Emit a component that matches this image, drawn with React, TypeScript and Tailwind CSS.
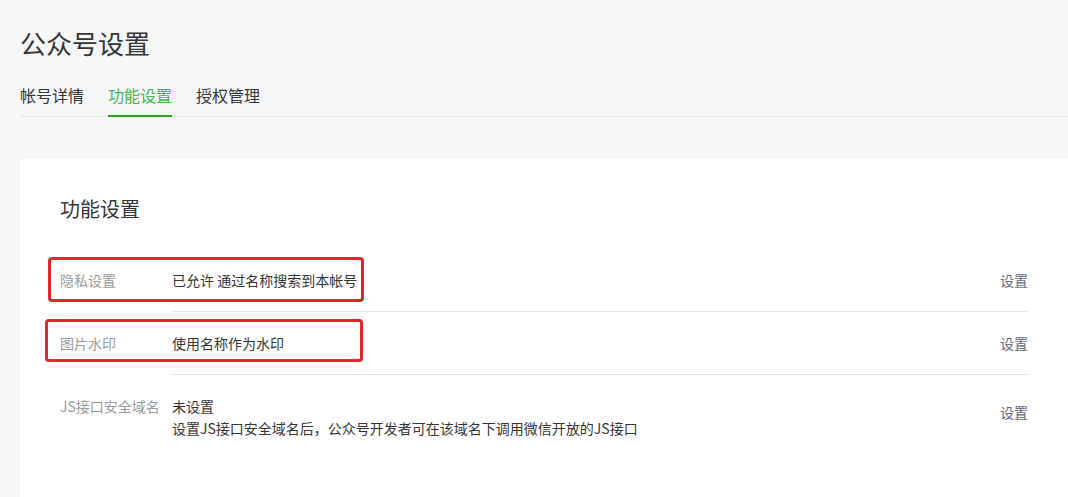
import React from "react"

const font = { fontFamily: '"Microsoft YaHei", "Noto Sans CJK SC", "Noto Sans", sans-serif' }

interface SettingRow {
  label: string
  lines: string[]
}

const rows: SettingRow[] = [
  { label: "隐私设置", lines: ["已允许 通过名称搜索到本帐号"] },
  { label: "图片水印", lines: ["使用名称作为水印"] },
  {
    label: "JS接口安全域名",
    lines: ["未设置", "设置JS接口安全域名后，公众号开发者可在该域名下调用微信开放的JS接口"],
  },
]

const tabs = ["帐号详情", "功能设置", "授权管理"]

function Tabs() {
  return (
    <div className="flex gap-6 border-b border-[#e4e6e8] mt-[14px]">
      {tabs.map((t, i) => (
        <div
          key={t}
          className={
            i === 1
              ? "h-[40px] leading-[37px] text-[16px] text-[#44b549] border-b-2 border-[#2ea121] -mb-px"
              : "h-[40px] leading-[37px] text-[16px] text-[#353535] -mb-px"
          }
        >
          {t}
        </div>
      ))}
    </div>
  )
}

export default function App() {
  return (
    <div className="min-h-screen bg-[#f6f7f8] pl-5 pt-[23px]" style={font}>
      <h1 className="text-[26px] leading-[40px] text-[#353535] font-normal">公众号设置</h1>
      <Tabs />

      <div className="relative mt-[42px] bg-white pl-10 pr-10 pt-[35px] pb-16 min-h-[340px]">
        <h2 className="text-[20px] leading-[30px] text-[#353535] font-normal mb-[25px]">功能设置</h2>

        {rows.map((row, i) => {
          const last = i === rows.length - 1
          return (
            <div key={row.label} className="flex text-[14px] leading-[22px]">
              <div className="w-[112px] py-5 text-[#9a9a9a] shrink-0">{row.label}</div>
              <div
                className={
                  last
                    ? "flex-1 flex justify-between py-5"
                    : "flex-1 flex justify-between py-5 border-b border-[#e7e7eb]"
                }
              >
                <div className="text-[#353535]">
                  {row.lines.map((l) => (
                    <div key={l}>{l}</div>
                  ))}
                </div>
                <a className={last ? "text-[#5d6a82] self-start mt-[6px] cursor-pointer" : "text-[#5d6a82] self-center cursor-pointer"}>
                  设置
                </a>
              </div>
            </div>
          )
        })}

        {/* red annotation boxes */}
        <div className="absolute left-[28px] top-[98px] w-[316px] h-[45px] border-[3px] border-[#e3242b] rounded-[4px]" />
        <div className="absolute left-[25px] top-[160px] w-[318px] h-[43px] border-[3px] border-[#e3242b] rounded-[4px]" />
      </div>
    </div>
  )
}
